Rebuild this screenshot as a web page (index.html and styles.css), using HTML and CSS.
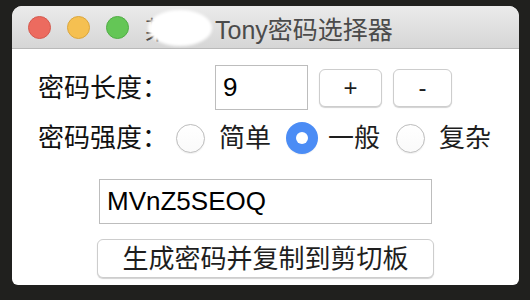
FILE: index.html
```html
<!DOCTYPE html>
<html lang="zh">
<head>
  <meta charset="UTF-8">
  <meta name="viewport" content="width=device-width, initial-scale=1.0">
  <title>Tony密码选择器</title>
  <link rel="stylesheet" href="styles.css">
</head>
<body>
  <div class="window">
    <div class="titlebar">
      <div class="lights">
        <span class="light red"></span>
        <span class="light yellow"></span>
        <span class="light green"></span>
      </div>
      <div class="title"><span class="masked">某某·<span class="blob"></span></span>Tony密码选择器</div>
    </div>

    <div class="content">
      <div class="row row-length">
        <span class="label label-length">密码长度：</span>
        <input class="field field-length" type="text" value="9">
        <button class="btn btn-small">+</button>
        <button class="btn btn-small btn-minus">-</button>
      </div>

      <div class="row row-strength">
        <span class="label label-strength">密码强度：</span>
        <label class="option"><span class="radio"></span>简单</label>
        <label class="option"><span class="radio checked"></span>一般</label>
        <label class="option"><span class="radio"></span>复杂</label>
      </div>

      <div class="row row-center">
        <input class="field field-password" type="text" value="MVnZ5SEOQ">
      </div>

      <div class="row row-center row-generate">
        <button class="btn btn-generate">生成密码并复制到剪切板</button>
      </div>
    </div>
  </div>
</body>
</html>
```

FILE: styles.css
```css
body {
  margin: 0;
  background-color: #20201e;
  font-family: "Liberation Sans", "Noto Sans CJK SC", sans-serif;
}
.window {
  margin: 6px 0 0 12px;
  width: 507px;
  height: 279px;
  background-color: #fff;
  border-radius: 10px 10px 6px 6px;
  overflow: hidden;
  display: flex;
  flex-direction: column;
}
.titlebar {
  height: 42px;
  display: flex;
  align-items: center;
  padding-left: 16px;
  background: linear-gradient(#ebebeb, #d6d6d6);
  border-bottom: 1px solid #b9b9b9;
}
.lights {
  display: flex;
  gap: 16px;
}
.light {
  width: 23px;
  height: 23px;
  border-radius: 50%;
  box-sizing: border-box;
}
.red { background-color: #ec6b5f; border: 1px solid #d45a4f; }
.yellow { background-color: #f5c051; border: 1px solid #daa53c; }
.green { background-color: #64c656; border: 1px solid #50ad45; }
.title {
  margin-left: 16px;
  margin-top: 1px;
  font-size: 25px;
  color: #4b4b4b;
  white-space: nowrap;
}
.masked {
  position: relative;
  display: inline-block;
  width: 70px;
}
.blob {
  position: absolute;
  left: 3px;
  top: 0;
  width: 64px;
  height: 36px;
  border-radius: 50%;
  background-color: #fff;
  filter: blur(1.5px);
}

.content {
  display: flex;
  flex-direction: column;
  padding-top: 16px;
}
.row {
  display: flex;
  align-items: center;
}
.label {
  font-size: 26px;
  color: #111;
  line-height: 1;
}
.row-length {
  height: 45px;
  padding-left: 26px;
}
.label-length {
  width: 177px;
}
.field {
  box-sizing: border-box;
  height: 45px;
  border: 1px solid #bdbdbd;
  border-radius: 0;
  padding: 0 7px;
  font-family: "Liberation Sans", sans-serif;
  font-size: 26px;
  color: #000;
  outline: none;
}
.field-length {
  width: 93px;
}
.btn {
  box-sizing: border-box;
  background-color: #fff;
  border: 1px solid #cdcdcd;
  border-radius: 6px;
  box-shadow: 0 1px 1px rgba(0, 0, 0, 0.18);
  font-family: "Liberation Sans", "Noto Sans CJK SC", sans-serif;
  color: #1e1e1e;
  padding: 0;
}
.btn-small {
  width: 63px;
  height: 38px;
  margin-left: 11px;
  font-size: 24px;
}
.btn-minus {
  width: 59px;
}

.row-strength {
  height: 34px;
  margin-top: 11px;
  padding-left: 26px;
}
.label-strength {
  width: 138px;
}
.option {
  display: flex;
  align-items: center;
  font-size: 26px;
  color: #1e1e1e;
  margin-right: 16px;
  line-height: 1;
}
.radio {
  box-sizing: border-box;
  width: 29px;
  height: 29px;
  border-radius: 50%;
  border: 1px solid #bcbcbc;
  background: linear-gradient(#fff, #fafafa);
  box-shadow: 0 1px 1px rgba(0, 0, 0, 0.06);
  margin-right: 14px;
  display: flex;
  align-items: center;
  justify-content: center;
}
.radio.checked {
  border: none;
  width: 32px;
  height: 32px;
  margin-left: -1px;
  margin-right: 10px;
  background: #4b8cf5;
}
.radio.checked::after {
  content: "";
  width: 12px;
  height: 12px;
  border-radius: 50%;
  background-color: #fff;
}

.row-center {
  justify-content: center;
  margin-top: 24px;
}
.field-password {
  width: 333px;
}
.row-generate {
  margin-top: 15px;
}
.btn-generate {
  width: 337px;
  height: 39px;
  font-size: 26px;
  line-height: 1;
}
```
